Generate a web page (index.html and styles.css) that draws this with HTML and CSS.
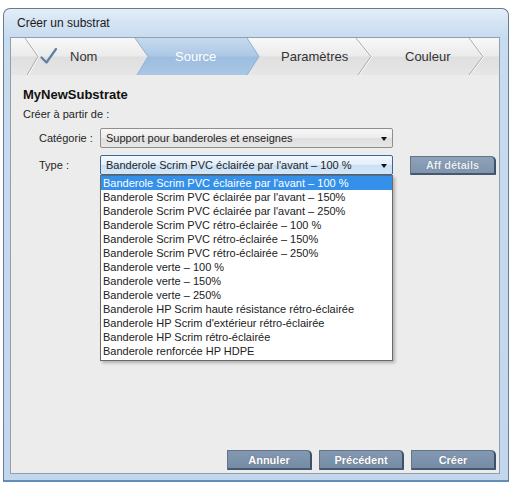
FILE: index.html
```html
<!DOCTYPE html>
<html lang="fr">
<head>
<meta charset="utf-8">
<title>Créer un substrat</title>
<link rel="stylesheet" href="styles.css">
</head>
<body>
<div class="window">
  <div class="titlebar">Créer un substrat</div>
  <div class="panel">
    <div class="wizard">
      <svg class="wizard-bg" width="488" height="37" viewBox="0 0 488 37" aria-hidden="true">
        <defs>
          <linearGradient id="barFill" x1="0" y1="0" x2="0" y2="1">
            <stop offset="0" stop-color="#f8f8f8"/>
            <stop offset="0.48" stop-color="#ebebeb"/>
            <stop offset="0.52" stop-color="#dfdfdf"/>
            <stop offset="1" stop-color="#e6e6e6"/>
          </linearGradient>
          <linearGradient id="activeFill" x1="0" y1="0" x2="0" y2="1">
            <stop offset="0" stop-color="#c6daef"/>
            <stop offset="0.48" stop-color="#adc8e5"/>
            <stop offset="0.52" stop-color="#9dbddf"/>
            <stop offset="1" stop-color="#a9c7e6"/>
          </linearGradient>
        </defs>
        <rect width="488" height="37" fill="url(#barFill)"/>
        <polygon points="124,0 236,0 248,18.5 236,37 126,37 137,18.5" fill="url(#activeFill)"/>
        <g fill="none" stroke="#ffffff" stroke-width="1">
          <polyline points="15,0 28,18.5 17,37"/>
          <polyline points="346,0 361,18.5 348,37"/>
          <polyline points="459,0 473,18.5 459,37"/>
        </g>
        <g fill="none" stroke="#a9a9a9" stroke-width="1">
          <polyline points="14,0 27,18.5 16,37"/>
          <polyline points="345,0 360,18.5 347,37"/>
          <polyline points="458,0 472,18.5 458,37"/>
        </g>
        <g fill="none" stroke="#8fb0d3" stroke-width="1">
          <polyline points="124,0 137,18.5 126,37"/>
          <polyline points="236,0 248,18.5 236,37"/>
        </g>
      </svg>
      <div class="steps">
        <div class="step step-done">
          <svg class="check" width="17" height="16" viewBox="0 0 17 16" aria-hidden="true">
            <path d="M1.5 9.5 L6.5 14.5 L16 1" fill="none" stroke="#5f7f9f" stroke-width="2.2" stroke-linecap="round" stroke-linejoin="round"/>
          </svg>
          <span>Nom</span>
        </div>
        <div class="step step-active">Source</div>
        <div class="step step-params">Paramètres</div>
        <div class="step step-color">Couleur</div>
      </div>
    </div>

    <div class="content">
      <h1 class="name">MyNewSubstrate</h1>
      <p class="from">Créer à partir de :</p>

      <div class="form">
        <label class="field-label">Catégorie :</label>
        <div class="select">
          <span class="select-value">Support pour banderoles et enseignes</span>
          <span class="arrow"></span>
        </div>
        <span class="spacer"></span>

        <label class="field-label">Type :</label>
        <div class="select select-open">
          <span class="select-value">Banderole Scrim PVC éclairée par l'avant – 100 %</span>
          <span class="arrow"></span>
          <ul class="options">
            <li class="option option-selected">Banderole Scrim PVC éclairée par l'avant – 100 %</li>
            <li class="option">Banderole Scrim PVC éclairée par l'avant – 150%</li>
            <li class="option">Banderole Scrim PVC éclairée par l'avant – 250%</li>
            <li class="option">Banderole Scrim PVC rétro-éclairée – 100 %</li>
            <li class="option">Banderole Scrim PVC rétro-éclairée – 150%</li>
            <li class="option">Banderole Scrim PVC rétro-éclairée – 250%</li>
            <li class="option">Banderole verte – 100 %</li>
            <li class="option">Banderole verte – 150%</li>
            <li class="option">Banderole verte – 250%</li>
            <li class="option">Banderole HP Scrim haute résistance rétro-éclairée</li>
            <li class="option">Banderole HP Scrim d'extérieur rétro-éclairée</li>
            <li class="option">Banderole HP Scrim rétro-éclairée</li>
            <li class="option">Banderole renforcée HP HDPE</li>
          </ul>
        </div>
        <button class="btn btn-details" type="button">Aff détails</button>
      </div>

      <div class="actions">
        <button class="btn" type="button">Annuler</button>
        <button class="btn" type="button">Précédent</button>
        <button class="btn" type="button">Créer</button>
      </div>
    </div>
  </div>
</div>
</body>
</html>
```

FILE: styles.css
```css
* {
  box-sizing: border-box;
}

html,
body {
  margin: 0;
  padding: 0;
  background: #ffffff;
  font-family: "Liberation Sans", Arial, sans-serif;
  color: #1f1f1f;
}

/* Window frame */
.window {
  margin: 8px 0 0 3px;
  width: 506px;
  height: 474px;
  display: flex;
  flex-direction: column;
  padding: 0 8px 6px 6px;
  border: 1px solid #6b7a8c;
  border-bottom: 2px solid #5f8fb8;
  border-radius: 7px 7px 0 0;
  background: linear-gradient(to bottom, #e4eef8 0, #d3e3f3 14px, #c8dcf0 28px, #c2d7ed 100%);
}

.titlebar {
  height: 28px;
  line-height: 28px;
  padding-left: 7px;
  font-size: 12px;
  color: #1a1a1a;
}

.panel {
  flex: 1;
  display: flex;
  flex-direction: column;
  border: 1px solid #939fac;
  background: #ececec;
}

/* Wizard step bar */
.wizard {
  position: relative;
  height: 37px;
}

.wizard-bg {
  position: absolute;
  left: 0;
  top: 0;
  display: block;
}

.steps {
  position: relative;
  display: flex;
  height: 37px;
  align-items: center;
  font-size: 13px;
  color: #333333;
}

.step {
  display: flex;
  align-items: center;
  height: 100%;
}

.step-done {
  width: 124px;
  padding-left: 29px;
  gap: 13px;
}

.check {
  display: block;
  margin-top: -1px;
}

.step-active {
  width: 112px;
  padding-left: 40px;
  color: #ffffff;
}

.step-params {
  width: 109px;
  padding-left: 34px;
}

.step-color {
  padding-left: 49px;
}

/* Form content */
.content {
  flex: 1;
  display: flex;
  flex-direction: column;
  padding: 12px 3px 3px 12px;
}

.name {
  margin: 0;
  font-size: 13px;
  line-height: 16px;
  font-weight: 700;
  color: #111111;
}

.from {
  margin: 4px 0 0;
  font-size: 11px;
  line-height: 14px;
}

.form {
  margin-top: 7px;
  padding-left: 16px;
  display: grid;
  grid-template-columns: 61px 293px 103px;
  grid-auto-rows: 20px;
  row-gap: 7px;
  align-items: center;
  font-size: 11px;
}

.field-label {
  line-height: 14px;
}

.select {
  position: relative;
  height: 20px;
  border: 1px solid #8f8f8f;
  border-radius: 2px;
  background: linear-gradient(to bottom, #f7f7f7 0%, #ececec 50%, #dfdfdf 51%, #e6e6e6 100%);
  padding-left: 5px;
  line-height: 18px;
  white-space: nowrap;
}

.select-open {
  border-color: #3d6891;
  background: linear-gradient(to bottom, #f4f9fe 0%, #e1eefa 50%, #c9e0f4 51%, #d5e7f7 100%);
}

.arrow {
  position: absolute;
  right: 5px;
  top: 8px;
  width: 0;
  height: 0;
  border-left: 3px solid transparent;
  border-right: 3px solid transparent;
  border-top: 4px solid #111111;
}

.options {
  position: absolute;
  left: -1px;
  top: 19px;
  width: 293px;
  margin: 0;
  padding: 0 0 2px;
  list-style: none;
  background: #ffffff;
  border: 1px solid #6a6a6a;
  box-shadow: 2px 2px 3px rgba(0, 0, 0, 0.25);
  z-index: 2;
}

.option {
  height: 14px;
  line-height: 14px;
  padding-left: 2px;
  font-size: 11px;
  color: #222222;
  white-space: nowrap;
}

.option-selected {
  background: #3590ea;
  color: #ffffff;
}

/* Buttons */
.btn {
  height: 20px;
  width: 85px;
  padding: 0;
  font-family: inherit;
  font-size: 11px;
  font-weight: 700;
  color: #ffffff;
  background: linear-gradient(to bottom, #8398b0 0%, #768ca6 100%);
  border: 1px solid #61748b;
  border-right: 2px solid #3f5168;
  border-bottom: 2px solid #46586e;
  border-radius: 1px 5px 1px 1px;
  text-shadow: 0 0 1px rgba(40, 55, 75, 0.5);
}

.btn-details {
  justify-self: end;
  width: 86px;
  height: 19px;
  color: #e9eef4;
  background: linear-gradient(to bottom, #8ea2b8 0%, #7f95ae 100%);
}

.actions {
  margin-top: auto;
  display: flex;
  justify-content: flex-end;
  gap: 7px;
}
```
